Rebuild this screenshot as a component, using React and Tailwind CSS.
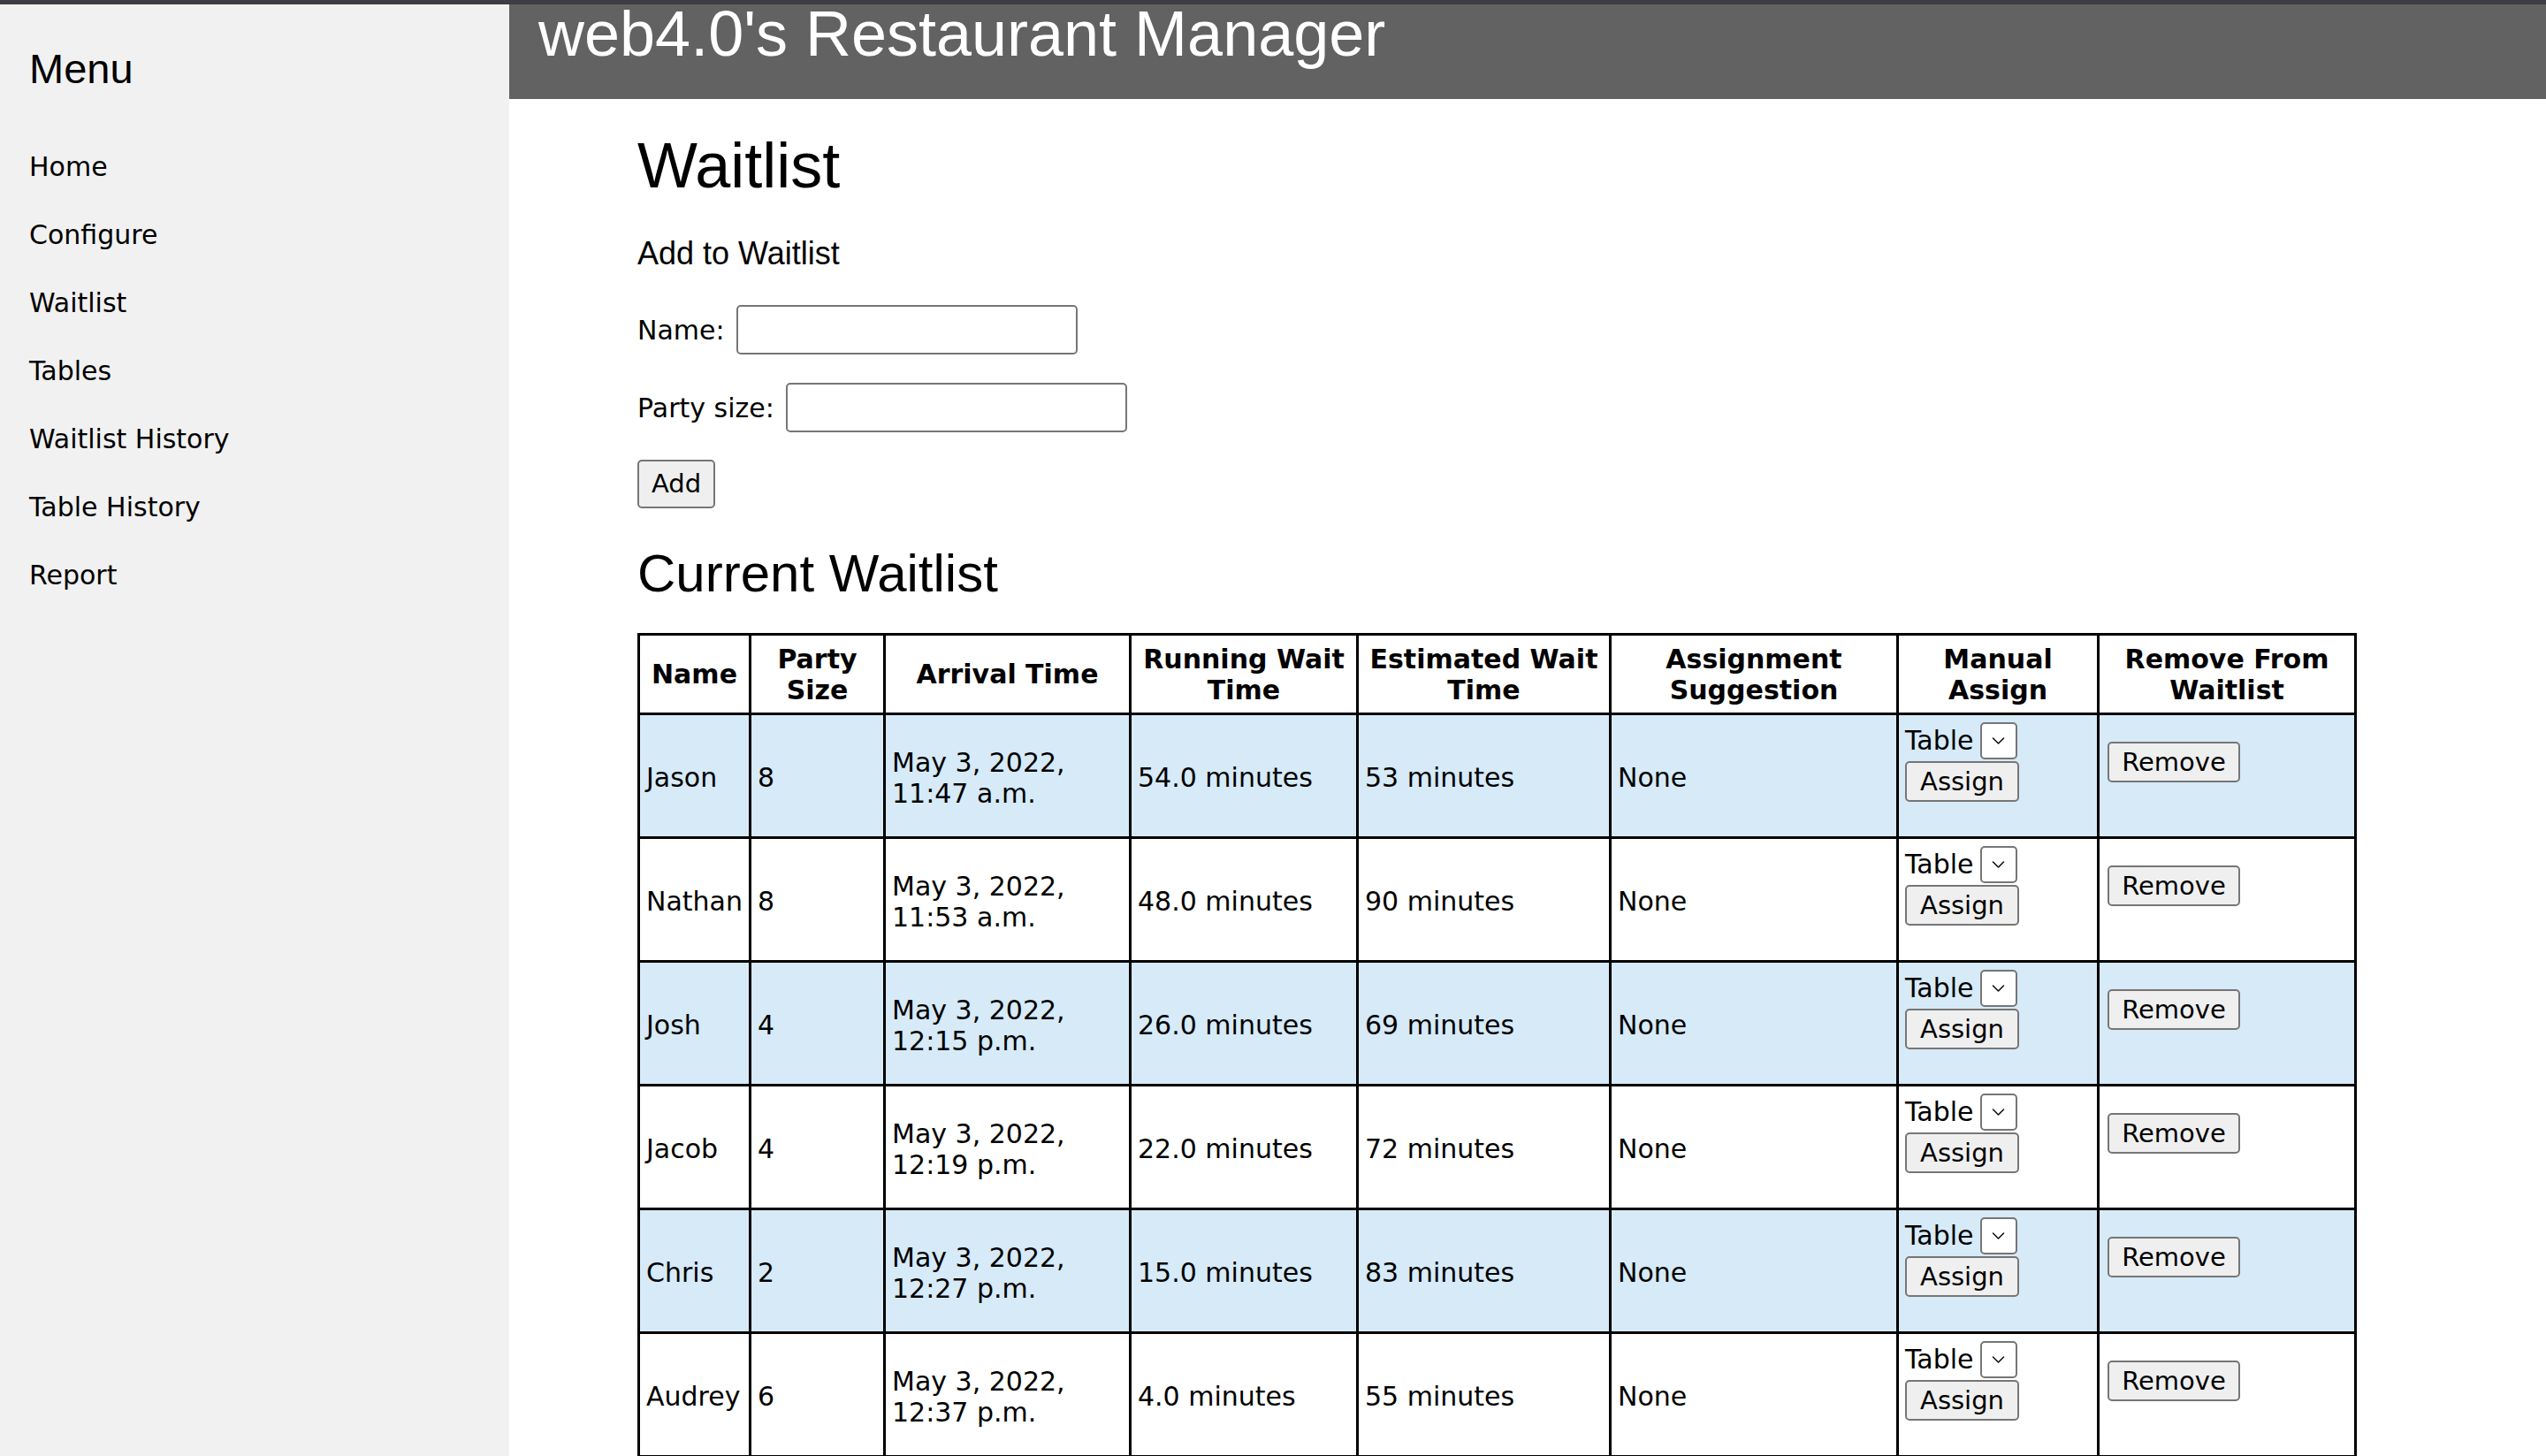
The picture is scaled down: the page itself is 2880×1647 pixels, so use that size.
import React from "react";

const rows = [
  ["Jason", "8", "May 3, 2022,", "11:47 a.m.", "54.0 minutes", "53 minutes"],
  ["Nathan", "8", "May 3, 2022,", "11:53 a.m.", "48.0 minutes", "90 minutes"],
  ["Josh", "4", "May 3, 2022,", "12:15 p.m.", "26.0 minutes", "69 minutes"],
  ["Jacob", "4", "May 3, 2022,", "12:19 p.m.", "22.0 minutes", "72 minutes"],
  ["Chris", "2", "May 3, 2022,", "12:27 p.m.", "15.0 minutes", "83 minutes"],
  ["Audrey", "6", "May 3, 2022,", "12:37 p.m.", "4.0 minutes", "55 minutes"],
];

const navItems = ["Home", "Configure", "Waitlist", "Tables", "Waitlist History", "Table History", "Report"];

function Chevron() {
  return (
    <svg width="15" height="10" viewBox="0 0 15 10" fill="none">
      <path d="M1.5 2 L7.5 8 L13.5 2" stroke="#111" strokeWidth="1.6" strokeLinecap="round" strokeLinejoin="round" />
    </svg>
  );
}

function Th({ w, children }) {
  return (
    <th className={`${w} h-[90px] border-[3px] border-black px-[7px] text-center align-middle font-bold leading-[35px]`}>
      {children}
    </th>
  );
}

function Td({ children }) {
  return (
    <td className="h-[140px] border-[3px] border-black pl-[7px] pr-[4px] pt-[4px] align-middle leading-[35px] whitespace-nowrap">
      {children}
    </td>
  );
}

export default function App() {
  return (
    <div className="min-h-screen flex flex-col bg-white text-black font-['DejaVu_Sans',sans-serif]">
      <div className="h-[5px] bg-[#3c3e43] shrink-0" />
      <div className="flex flex-1">
        <aside className="w-[576px] shrink-0 bg-[#f1f1f1] pl-[33px] pt-[49px]">
          <h2 className="font-['Liberation_Sans',Arial,sans-serif] text-[47px] leading-none font-normal">Menu</h2>
          <nav className="mt-[49px] flex flex-col">
            {navItems.map((item) => (
              <a key={item} className="h-[77px] text-[30px] leading-[77px] text-black">
                {item}
              </a>
            ))}
          </nav>
        </aside>
        <div className="flex-1 flex flex-col min-w-0">
          <header className="h-[107px] bg-[#626262] pl-[33px] overflow-hidden">
            <h1 className="font-['Liberation_Sans',Arial,sans-serif] text-[72px] leading-[66px] text-white font-normal">
              web4.0's Restaurant Manager
            </h1>
          </header>
          <main className="pl-[145px] pt-[39px] pb-[2px]">
            <h1 className="font-['Liberation_Sans',Arial,sans-serif] text-[72px] leading-none font-normal">Waitlist</h1>
            <h3 className="mt-[46px] font-['Liberation_Sans',Arial,sans-serif] text-[36px] leading-none font-normal">
              Add to Waitlist
            </h3>
            <div className="mt-[40px] flex items-center h-[56px] text-[30px]">
              <label>Name:</label>
              <input className="ml-[13px] w-[386px] h-[56px] border-2 border-[#767676] rounded-[5px] bg-white" />
            </div>
            <div className="mt-[32px] flex items-center h-[56px] text-[30px]">
              <label>Party size:</label>
              <input className="ml-[13px] w-[386px] h-[56px] border-2 border-[#767676] rounded-[5px] bg-white" />
            </div>
            <button className="mt-[31px] block w-[88px] h-[55px] border-2 border-[#767676] rounded-[5px] bg-[#efefef] text-[29px] leading-none">
              Add
            </button>
            <h2 className="mt-[44px] font-['Liberation_Sans',Arial,sans-serif] text-[60px] leading-none font-normal">
              Current Waitlist
            </h2>
            <table className="mt-[37px] table-fixed border-collapse border-[3px] border-black w-[1942px] text-[30px]">
              <thead>
                <tr>
                  <Th w="w-[126px]">Name</Th>
                  <Th w="w-[152px]">Party Size</Th>
                  <Th w="w-[278px]">Arrival Time</Th>
                  <Th w="w-[257px]">Running Wait Time</Th>
                  <Th w="w-[286px]">Estimated Wait Time</Th>
                  <Th w="w-[325px]">Assignment Suggestion</Th>
                  <Th w="w-[227px]">Manual Assign</Th>
                  <Th w="w-[291px]">Remove From Waitlist</Th>
                </tr>
              </thead>
              <tbody>
                {rows.map((r, i) => (
                  <tr key={r[0]} className={i % 2 === 0 ? "bg-[#d6eaf8]" : "bg-white"}>
                    <Td>{r[0]}</Td>
                    <Td>{r[1]}</Td>
                    <Td>
                      {r[2]}
                      <br />
                      {r[3]}
                    </Td>
                    <Td>{r[4]}</Td>
                    <Td>{r[5]}</Td>
                    <Td>None</Td>
                    <td className="h-[140px] border-[3px] border-black pl-[7px] align-middle">
                      <div className="mb-[31px] flex flex-col items-start">
                        <div className="flex items-center h-[42px]">
                          <span className="text-[30px] leading-none">Table</span>
                          <div className="ml-[7px] w-[42px] h-[42px] flex items-center justify-center border-2 border-[#767676] rounded-[5px] bg-white">
                            <Chevron />
                          </div>
                        </div>
                        <button className="mt-[2px] w-[129px] h-[46px] border-2 border-[#767676] rounded-[5px] bg-[#efefef] text-[29px] leading-none">
                          Assign
                        </button>
                      </div>
                    </td>
                    <td className="h-[140px] border-[3px] border-black pl-[9px] align-middle">
                      <button className="mb-[31px] block w-[150px] h-[46px] border-2 border-[#767676] rounded-[5px] bg-[#efefef] text-[29px] leading-none">
                        Remove
                      </button>
                    </td>
                  </tr>
                ))}
              </tbody>
            </table>
          </main>
        </div>
      </div>
    </div>
  );
}
